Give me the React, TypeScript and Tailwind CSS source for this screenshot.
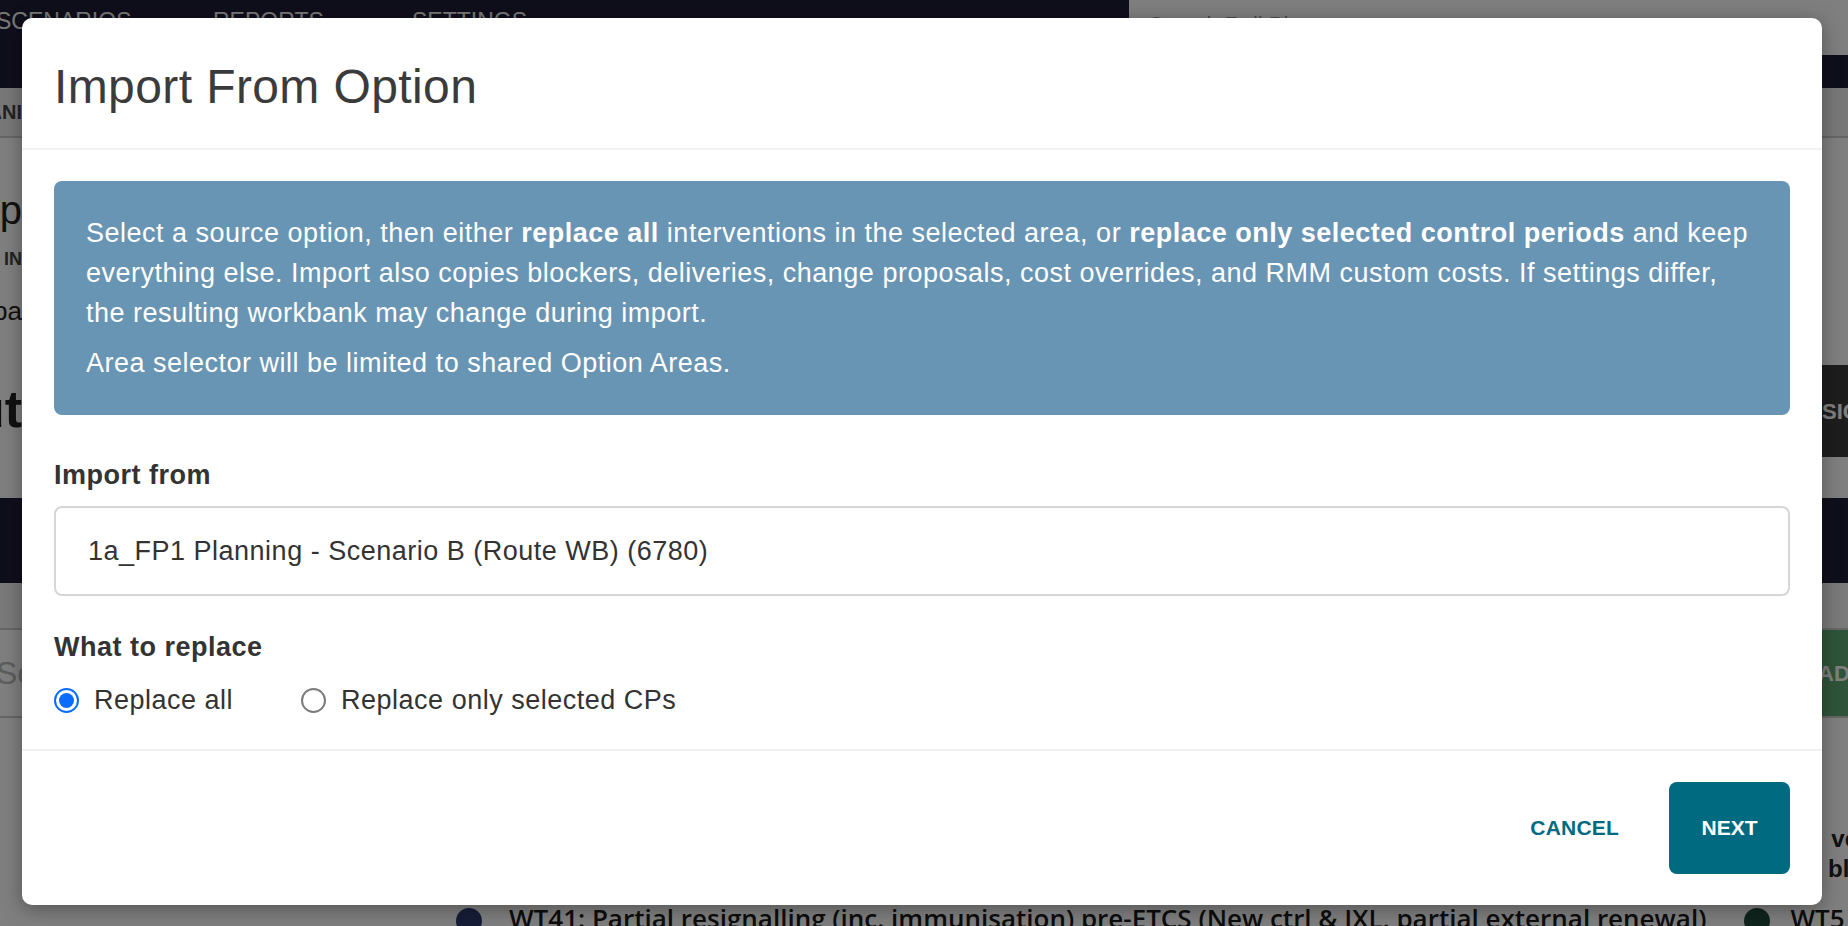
import { useState } from "react";

const FONT = { fontFamily: '"Liberation Sans", Arial, Helvetica, sans-serif' };

// narrow sliver of the page that peeks out left of the modal, text clipped from the left
const Peek = ({ children, className }: { children: React.ReactNode; className?: string }) => (
  <div className={"flex w-[22px] justify-end overflow-hidden whitespace-nowrap " + (className ?? "")}>
    <span>{children}</span>
  </div>
);

// page that sits behind the dialog (mostly hidden by the backdrop + modal)
const BackgroundPage = () => (
  <div className="flex h-[926px] w-[1848px] flex-col bg-white" style={FONT}>
    <div className="flex h-[88px] shrink-0">
      <div className="flex w-[1129px] items-start bg-[#1f1c36] pt-[4px] text-[23px] text-[#f2f2f2]">
        <span className="ml-[-4px] w-[217px]">SCENARIOS</span>
        <span className="w-[199px]">REPORTS</span>
        <span>SETTINGS</span>
      </div>
      <div className="flex flex-1 flex-col bg-white">
        <div className="px-[20px] pt-[8px] text-[22px] text-[#999]">Search Rail Pl</div>
        <div className="mt-auto flex h-[33px] justify-end">
          <div className="w-[26px] bg-[#1f1c36]" />
        </div>
      </div>
    </div>
    <div className="flex h-[50px] shrink-0 items-center border-b-2 border-[#ccc] bg-[#f0f0f0] text-[20px] font-bold text-[#444]">
      <Peek>PLANI</Peek>
    </div>
    <div className="flex h-[360px] shrink-0 justify-between">
      <div className="flex flex-col text-[#222]">
        <Peek className="mt-[50px] text-[40px] leading-[44px]">Imp</Peek>
        <Peek className="mt-[14px] text-[18px] font-bold text-[#444]">BY IN</Peek>
        <Peek className="mt-[19px] text-[26px]">Workba</Peek>
        <Peek className="mt-[50px] text-[52px] font-bold leading-[56px]">Out</Peek>
      </div>
      <div className="mt-[227px] flex h-[92px] w-[60px] items-center bg-[#3a3a3a] pl-[34px] text-[22px] font-bold text-white">
        SIC
      </div>
    </div>
    <div className="h-[85px] shrink-0 bg-[#1f1c36]" />
    <div className="h-[45px] shrink-0 bg-[#f4f4f4]" />
    <div className="flex h-[90px] shrink-0 items-center justify-between border-y-2 border-[#ccc]">
      <span className="-ml-[4px] text-[32px] text-[#bbb]">Search</span>
      <div className="flex h-full w-[60px] items-center bg-[#5fa872] pl-[30px] text-[22px] font-bold text-white">ADD</div>
    </div>
    <div className="flex flex-1 flex-col items-end pt-[106px] text-[24px] font-bold leading-[30px] text-[#222]">
      <span className="-mr-[10px]">ve</span>
      <span className="-mr-[16px]">blo</span>
    </div>
    <div
      className="flex h-[22px] shrink-0 items-start pl-[456px] pt-[6px] text-[26px] font-semibold leading-[16px] text-[#1a1a1a]"
      style={{ fontFamily: '"Open Sans", sans-serif' }}
    >
      <span className="mt-[-2px] h-[26px] w-[26px] shrink-0 rounded-full bg-[#2c3b6e]" />
      <span className="ml-[27px] whitespace-nowrap tracking-[0px]">
        WT41: Partial resignalling (inc. immunisation) pre-ETCS (New ctrl &amp; IXL, partial external renewal)
      </span>
      <span className="ml-[38px] mt-[-2px] h-[26px] w-[26px] shrink-0 rounded-full bg-[#1f4a3a]" />
      <span className="ml-[20px] whitespace-nowrap">WT5</span>
    </div>
  </div>
);

const Radio = ({ checked, label, onClick }: { checked: boolean; label: string; onClick: () => void }) => (
  <button type="button" onClick={onClick} className="flex items-center gap-[15px]">
    {checked ? (
      <span className="flex h-[25px] w-[25px] items-center justify-center rounded-full border-[2px] border-[#0a6cff] bg-white">
        <span className="h-[15px] w-[15px] rounded-full bg-[#0a6cff]" />
      </span>
    ) : (
      <span className="h-[25px] w-[25px] rounded-full border-[2px] border-[#7b7b7b] bg-white" />
    )}
    <span className="text-[27px] leading-[40px] tracking-[0.5px] text-[#333]">{label}</span>
  </button>
);

export default function App() {
  const [mode, setMode] = useState<"all" | "cps">("all");

  return (
    <div className="relative h-[926px] w-[1848px] overflow-hidden">
      <BackgroundPage />

      {/* backdrop + dialog */}
      <div className="absolute inset-0 bg-black/50 pl-[22px] pt-[18px]" style={FONT}>
        <div className="flex w-[1800px] flex-col rounded-[10px] bg-white shadow-[0_4px_20px_rgba(0,0,0,0.35)]">
          <div className="flex h-[132px] items-center border-b-2 border-[#f1f1f1] px-[32px] pt-[7px]">
            <h2 className="text-[48px] leading-none tracking-[0.4px] text-[#3b3b3b]">Import From Option</h2>
          </div>

          <div className="flex flex-col px-[32px] pb-[29px] pt-[31px]">
            <div className="rounded-[8px] bg-[#6995b4] px-[32px] py-[32px] text-[27px] leading-[40px] tracking-[0.5px] text-white">
              <p>
                Select a source option, then either <b>replace all</b> interventions in the selected area, or{" "}
                <b>replace only selected control periods</b> and keep everything else. Import also copies blockers,
                deliveries, change proposals, cost overrides, and RMM custom costs. If settings differ, the resulting
                workbank may change during import.
              </p>
              <p className="mt-[10px]">Area selector will be limited to shared Option Areas.</p>
            </div>

            <label className="mt-[40px] text-[27px] font-bold leading-[40px] tracking-[0.5px] text-[#333]">Import from</label>
            <div className="mt-[11px] flex h-[90px] items-center rounded-[8px] border-2 border-[#d6d6d6] px-[32px] text-[27px] tracking-[0.5px] text-[#333]">
              1a_FP1 Planning - Scenario B (Route WB) (6780)
            </div>

            <div className="mt-[31px] text-[27px] font-bold leading-[40px] tracking-[0.5px] text-[#333]">What to replace</div>
            <div className="mt-[13px] flex items-center gap-[68px]">
              <Radio checked={mode === "all"} label="Replace all" onClick={() => setMode("all")} />
              <Radio checked={mode === "cps"} label="Replace only selected CPs" onClick={() => setMode("cps")} />
            </div>
          </div>

          <div className="flex items-center justify-end gap-[50px] border-t-2 border-[#f1f1f1] px-[32px] pb-[31px] pt-[31px]">
            <button type="button" className="text-[21px] font-bold tracking-[0.2px] text-[#006a80]">
              CANCEL
            </button>
            <button
              type="button"
              className="flex h-[92px] w-[121px] items-center justify-center rounded-[8px] bg-[#006a80] text-[21px] font-bold text-white"
            >
              NEXT
            </button>
          </div>
        </div>
      </div>
    </div>
  );
}
